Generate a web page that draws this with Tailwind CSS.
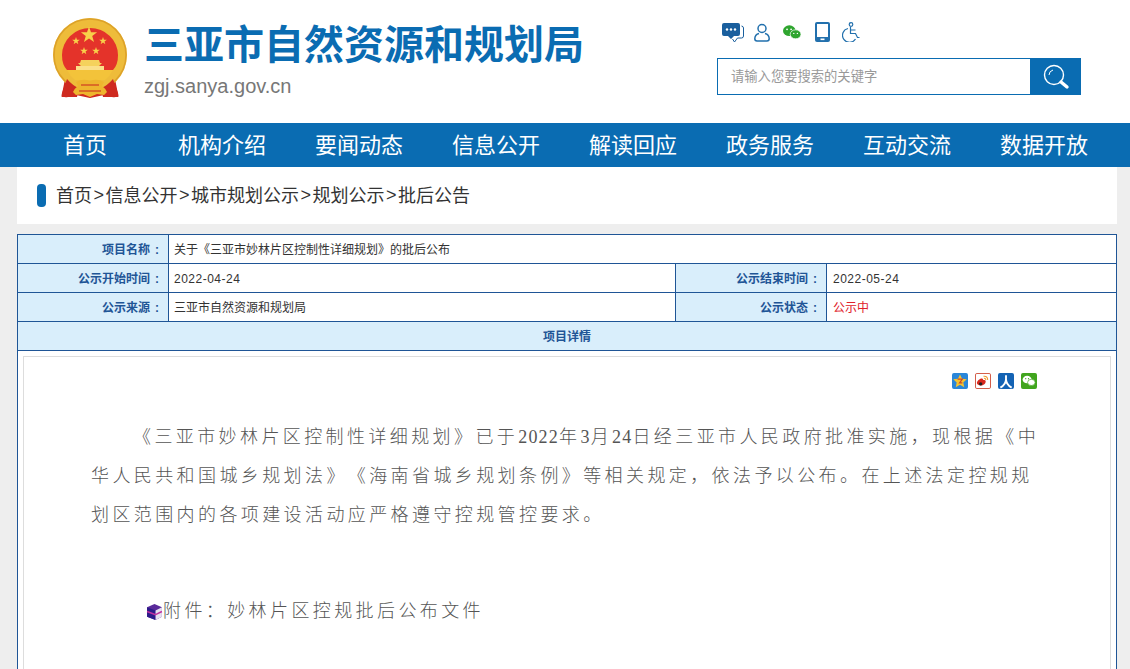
<!DOCTYPE html>
<html lang="zh"><head><meta charset="utf-8"><script src="https://cdn.jsdelivr.net/npm/@tailwindcss/browser@4"></script></head>
<body class="bg-[#eeeeee] font-['Liberation_Sans','Noto_Sans_CJK_SC',sans-serif] overflow-hidden h-[669px]">
<header class="bg-white h-[123px] flex relative">
  <div class="ml-[52px] mt-[18px] w-[78px] h-[81px]">
    <svg viewBox="0 0 78 81" width="78" height="81">
      <defs><path id="s" d="M0-1 .235-.324.951-.309.38.124.588.809 0 .4-.588.809-.38.124-.951-.309-.235-.324z"/></defs>
      <path d="M14 56 L10 76 Q10 80 16 79 L24 77 L38 80 L52 77 L60 79 Q66 80 66 76 L62 56 Z" fill="#d0281f"/>
      <circle cx="38" cy="37" r="37" fill="#eebc3a"/>
      <circle cx="38" cy="37" r="36" fill="none" stroke="#dca12a" stroke-width="1.500"/>
      <path d="M10 37a28 27 0 0 1 56 0q0 10-5 15H15q-5-5-5-15z" fill="#e4332a"/>
      <use href="#s" transform="translate(37 17) scale(8.500)" fill="#f8d04a"/>
      <use href="#s" transform="translate(24 23) scale(4)" fill="#f8d04a"/>
      <use href="#s" transform="translate(51 23) scale(4)" fill="#f8d04a"/>
      <use href="#s" transform="translate(32 33) scale(4)" fill="#f8d04a"/>
      <use href="#s" transform="translate(44 33) scale(4)" fill="#f8d04a"/>
      <path d="M29 42h18l1 3h2l-3 3h-18l-3-3h2z" fill="#f5d25c"/>
      <path d="M24 48h28v4H24z" fill="#fbe08a"/>
      <path d="M15 52h46q-3 6-8 10H23q-5-4-8-10z" fill="#f3c33a"/>
      <path d="M15 61q6 7 12 9l-2 9H10q-1 0 0-4z M61 61q-6 7-12 9l2 9h15q1 0 0-4z" fill="#cf2a20"/>
      <path d="M24 64q7-4 14-1 7-3 14 1l-2 4q3 2 5 6l-3 3-7-1 -7 3-7-3-7 1-3-3q2-4 5-6z" fill="#eeb52e"/>
      <path d="M29 67h18M27 73h22" stroke="#c8251f" stroke-width="1.200" fill="none"/>
    </svg>
  </div>
  <div class="ml-[14px] mt-[20px]">
    <h1 class="text-[40px] leading-[50px] font-bold text-[#0a6cb2] whitespace-nowrap">三亚市自然资源和规划局</h1>
    <p class="text-[20px] leading-6 text-[#777777] mt-[4px]">zgj.sanya.gov.cn</p>
  </div>
  <div class="absolute left-[717px] top-[20px]">
    <div class="flex items-center ml-[5px] h-[24px]">
      <svg width="22" height="21" viewBox="0 0 22 21" class="mr-[10px]"><path d="M2 1h14q2 0 2 2v9q0 2-2 2h-4l-3 3-3-3H2q-2 0-2-2V3q0-2 2-2z" fill="#1a5f9e"/><circle cx="5" cy="7.500" r="1.200" fill="#fff"/><circle cx="9" cy="7.500" r="1.200" fill="#fff"/><circle cx="13" cy="7.500" r="1.200" fill="#fff"/><path d="M19.500 4q2 .3 2 2v8q0 2-2 2h-4l-3 4-2-3" fill="none" stroke="#1a5f9e" stroke-width="1"/></svg>
      <svg width="16" height="19" viewBox="0 0 16 19" class="mr-[13px]" fill="none" stroke="#2270ad" stroke-width="1.500"><circle cx="8" cy="5.500" r="4"/><path d="M5 10.500q-4 1-4.200 5 0 2.500 2.200 2.500h10q2.200 0 2.200-2.500-.2-4-4.200-5"/></svg>
      <svg width="18" height="15" viewBox="0 0 20 16" class="mr-[14px]"><ellipse cx="7" cy="6" rx="7" ry="6" fill="#2fa52f"/><ellipse cx="14" cy="10" rx="6" ry="5" fill="#2fa52f" stroke="#fff" stroke-width=".8"/><circle cx="4.500" cy="4.500" r="1" fill="#fff"/><circle cx="9" cy="4.500" r="1" fill="#fff"/><circle cx="12" cy="9" r=".8" fill="#fff"/><circle cx="16" cy="9" r=".8" fill="#fff"/></svg>
      <svg width="15" height="20" viewBox="0 0 15 20" class="mr-[12px]"><rect width="15" height="20" rx="2" fill="#2270ad"/><rect x="2" y="2" width="11" height="13" fill="#fff"/><rect x="5.500" y="16.500" width="4" height="1.600" fill="#fff"/></svg>
      <svg width="18" height="20" viewBox="0 0 18 20" fill="none" stroke="#2270ad" stroke-width="1.200"><circle cx="9" cy="2.500" r="1.800"/><path d="M8.500 5v6.500h5l2 4h2M8.500 8h5M6 6.500a7 7 0 1 0 7.500 10.500"/></svg>
    </div>
    <div class="flex w-[364px] h-[37px] mt-[14px] border border-[#0a6cb2] bg-white">
      <div class="flex-1 pl-[13px] text-[13.3px] leading-[35px] text-[#999999]">请输入您要搜索的关键字</div>
      <div class="w-[51px] bg-[#0a6cb2] -my-px -mr-px flex items-center justify-center">
        <svg width="28" height="28" viewBox="0 0 28 28" fill="none" stroke="#fff"><circle cx="12" cy="12" r="9.500" stroke-width="1.400"/><path d="M19 19l6 5" stroke-width="3.400" stroke-linecap="round"/><path d="M7 12a5.500 5.500 0 0 1 4-5" stroke-width="1"/></svg>
      </div>
    </div>
  </div>
</header>
<nav class="bg-[#0a6cb2] h-[44px] flex text-white text-[22px] leading-[46px] pl-[16.5px]">
  <a class="w-[137px] text-center">首页</a><a class="w-[137px] text-center">机构介绍</a><a class="w-[137px] text-center">要闻动态</a><a class="w-[137px] text-center">信息公开</a><a class="w-[137px] text-center">解读回应</a><a class="w-[137px] text-center">政务服务</a><a class="w-[137px] text-center">互动交流</a><a class="w-[137px] text-center">数据开放</a>
</nav>
<div class="mx-[17px] w-[1100px] bg-white h-[57px] flex items-center pl-[20px] text-[18px] text-[#333333]">
  <span class="w-[9px] h-[23px] rounded-[4px] bg-[#0a6cb2] mr-[10px]"></span>
  <span class="pt-[1px]">首页</span><span class="w-[13.5px] text-center">&gt;</span><span class="pt-[1px]">信息公开</span><span class="w-[13.5px] text-center">&gt;</span><span class="pt-[1px]">城市规划公示</span><span class="w-[13.5px] text-center">&gt;</span><span class="pt-[1px]">规划公示</span><span class="w-[13.5px] text-center">&gt;</span><span class="pt-[1px]">批后公告</span>
</div>
<main class="mx-[17px] mt-[10px] w-[1100px] border border-b-0 border-[#1f5596] bg-white h-[435px] overflow-hidden">
  <div class="grid grid-cols-[150px_506px_1fr] grid-rows-[28px_28px_28px_28px] text-[12px] text-[#333333] gap-px bg-[#1f5596] border-b border-[#1f5596]">
    <div class="bg-[#d9eefb] flex items-center justify-end pr-[4px] pt-[2px] font-bold text-[#1f5596]">项目名称<span class="w-[14px] text-center">:</span></div>
    <div class="bg-white col-span-2 flex items-center pl-[5px] pt-[2px]">关于《三亚市妙林片区控制性详细规划》的批后公布</div>
    <div class="bg-[#d9eefb] flex items-center justify-end pr-[4px] pt-[2px] font-bold text-[#1f5596]">公示开始时间<span class="w-[14px] text-center">:</span></div>
    <div class="bg-white flex items-center pl-[5px] pt-[2px] tracking-[0.5px]">2022-04-24</div>
    <div class="flex bg-[#1f5596] gap-px"><div class="bg-[#d9eefb] w-[150px] flex items-center justify-end pr-[4px] pt-[2px] font-bold text-[#1f5596]">公示结束时间<span class="w-[14px] text-center">:</span></div><div class="bg-white flex-1 flex items-center pl-[6px] pt-[2px] tracking-[0.5px]">2022-05-24</div></div>
    <div class="bg-[#d9eefb] flex items-center justify-end pr-[4px] pt-[2px] font-bold text-[#1f5596]">公示来源<span class="w-[14px] text-center">:</span></div>
    <div class="bg-white flex items-center pl-[5px] pt-[2px]">三亚市自然资源和规划局</div>
    <div class="flex bg-[#1f5596] gap-px"><div class="bg-[#d9eefb] w-[150px] flex items-center justify-end pr-[4px] pt-[2px] font-bold text-[#1f5596]">公示状态<span class="w-[14px] text-center">:</span></div><div class="bg-white flex-1 flex items-center pl-[6px] pt-[2px] text-[#e0202a]">公示中</div></div>
    <div class="bg-[#d9eefb] col-span-3 flex items-center justify-center pt-[2px] font-bold text-[#1f5596]">项目详情</div>
  </div>
  <div class="mx-[5px] mt-[5px] border border-b-0 border-[#dddddd] h-[320px] relative">
    <div class="flex justify-end gap-[7px] pt-[16px] pr-[73px] h-[37px]">
      <svg width="16" height="16" viewBox="0 0 17 17"><rect width="17" height="17" rx="2" fill="#2a86d8"/><path d="M8.500 1.500l2.200 4.600 5 .6-3.700 3.400 1 5-4.500-2.500-4.500 2.500 1-5L1.300 6.700l5-.6z" fill="#f6c32e"/><path d="M6 6.500h5l-3 4h3" fill="none" stroke="#c9492a" stroke-width="1.300"/></svg>
      <svg width="16" height="16" viewBox="0 0 17 17"><rect x=".5" y=".5" width="16" height="16" rx="1.500" fill="#fff" stroke="#d0503a"/><path d="M2 11c0-3 4-6 6-5 1 .5.5 1.500 1 1.500 2-.5 3 1 2 3-1 3-8 4-9 .5z" fill="#d8271c"/><circle cx="6" cy="11.500" r="1.800" fill="#222"/><path d="M9 3.500q4.500-.5 4.500 4M9.500 5.500q2-.2 2 2" fill="none" stroke="#ef9a2e" stroke-width="1.100"/></svg>
      <svg width="16" height="16" viewBox="0 0 17 17"><rect width="17" height="17" rx="2" fill="#1463b4"/><path d="M8.500 2.500v4c0 4-2 7-6 9M8.500 6.500c0 4 2 7 6 9" fill="none" stroke="#fff" stroke-width="2"/></svg>
      <svg width="16" height="16" viewBox="0 0 17 17"><rect width="17" height="17" rx="2" fill="#41a51e"/><ellipse cx="6.500" cy="7" rx="4.800" ry="4" fill="#fff"/><ellipse cx="11" cy="10" rx="4" ry="3.300" fill="#fff" stroke="#41a51e" stroke-width=".7"/><circle cx="5" cy="6" r=".7" fill="#41a51e"/><circle cx="8" cy="6" r=".7" fill="#41a51e"/></svg>
    </div>
    <div class="absolute left-[67px] top-[61px] w-[952px] text-[#555555] text-[18px] leading-[39px] tracking-[3.4px] [text-spacing-trim:space-all] font-['Liberation_Serif','Noto_Sans_CJK_SC',serif] font-light">
      <p class="indent-[42px]">《三亚市妙林片区控制性详细规划》已于<span class="tracking-[1.2px]">2022</span>年<span class="tracking-[1.2px]">3</span>月<span class="tracking-[1.2px]">24</span>日经三亚市人民政府批准实施，现根据《中华人民共和国城乡规划法》《海南省城乡规划条例》等相关规定，依法予以公布。在上述法定控规规划区范围内的各项建设活动应严格遵守控规管控要求。</p>
      <div class="flex items-center mt-[57px] ml-[55px]">
        <svg width="17" height="18" viewBox="0 0 16 17" class="shrink-0"><path d="M1 4l7-3 7 3v9l-6 3-8-3z" fill="#5a2a9a"/><path d="M1 4l8 3v9l-8-3z" fill="#2b1a8a"/><path d="M9 7l6-3v9l-6 3z" fill="#e6e0f0"/><path d="M1 8l8 3M9 11l6-3" stroke="#c030a0" stroke-width="1.500"/></svg>
        <span>附件：妙林片区控规批后公布文件</span>
      </div>
    </div>
  </div>
</main>
</body></html>
